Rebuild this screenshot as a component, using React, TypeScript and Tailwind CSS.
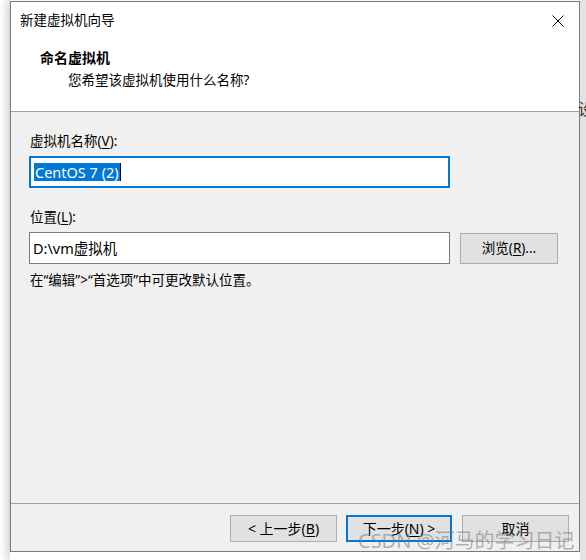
import React from "react";

const font = { fontFamily: '"Noto Sans", "Noto Sans CJK SC", sans-serif' };

function U({ c }: { c: string }) {
  return <span className="underline underline-offset-2">{c}</span>;
}

export default function App() {
  return (
    <div className="relative w-[586px] h-[560px] overflow-hidden bg-white text-[13.5px] text-black" style={font}>
      <div className="flex h-full">
        <div className="w-[10px] shrink-0 bg-gradient-to-r from-white to-[#ececec]" />
        <div className="flex flex-col">
          <div className="h-[1px] bg-white" />
          <div className="w-[570px] h-[551px] border border-[#7a7a7a] flex flex-col bg-[#f0f0f0] shadow-[0_4px_10px_rgba(0,0,0,0.18)]">
            {/* title + header */}
            <div className="bg-white border-b border-[#a0a0a0] flex flex-col">
              <div className="h-[36px] flex items-center justify-between pl-[9px] pr-[15px]">
                <span className="leading-[20px]">新建虚拟机向导</span>
                <svg width="12" height="12" viewBox="0 0 12 12" className="mt-[1px]">
                  <path d="M0.5 0.5 L11.5 11.5 M11.5 0.5 L0.5 11.5" stroke="#000" strokeWidth="1" />
                </svg>
              </div>
              <div className="h-[73px] pt-[10px] pl-[29px] flex flex-col">
                <span className="leading-[20px] font-bold text-[14px]">命名虚拟机</span>
                <span className="leading-[20px] mt-[2px] pl-[28px]">您希望该虚拟机使用什么名称?</span>
              </div>
            </div>
            {/* content */}
            <div className="flex-1 flex flex-col pt-[19px] pl-[18px]">
              <span className="leading-[20px] pl-[1px]">
                虚拟机名称(<U c="V" />):
              </span>
              <div className="mt-[5px] w-[421px] h-[32px] border-2 border-[#0078d7] bg-white flex items-center pl-[3px] text-[14.5px]">
                <span className="bg-[#0078d7] text-white leading-[18px] px-[1px]">CentOS 7 (2)</span>
                <span className="w-[1px] h-[18px] bg-black" />
              </div>
              <span className="leading-[20px] mt-[19px] pl-[1px]">
                位置(<U c="L" />):
              </span>
              <div className="mt-[5px] flex items-center gap-[10px]">
                <div className="w-[421px] h-[32px] border border-[#7a7a7a] bg-white flex items-center pl-[3px] text-[14.5px]">
                  <span className="leading-[18px]">D:\vm虚拟机</span>
                </div>
                <div className="w-[98px] h-[31px] border border-[#adadad] bg-[#e1e1e1] flex items-center justify-center">
                  浏览(<U c="R" />)...
                </div>
              </div>
              <span className="leading-[20px] mt-[6px] pl-[1px]">在“编辑”&gt;“首选项”中可更改默认位置。</span>
            </div>
            {/* footer */}
            <div className="h-[48px] border-t border-[#a0a0a0] flex justify-end items-start pt-[11px] pr-[10px] text-[14px]">
              <div className="w-[107px] h-[27px] border border-[#adadad] bg-[#e1e1e1] flex items-center justify-center">
                &lt; 上一步(<U c="B" />)
              </div>
              <div className="ml-[9px] w-[106px] h-[27px] border-2 border-[#0078d7] bg-[#e1e1e1] flex items-center justify-center">
                下一步(<U c="N" />) &gt;
              </div>
              <div className="ml-[10px] w-[107px] h-[27px] border border-[#adadad] bg-[#e1e1e1] flex items-center justify-center">
                取消
              </div>
            </div>
          </div>
          <div className="flex-1 bg-white" />
        </div>
        <div className="w-[6px] shrink-0 bg-[#e3e3e3] flex flex-col pt-[100px]">
          <span className="text-[16px] leading-[18px] text-[#333] -ml-[2px]">设</span>
        </div>
      </div>
      <span
        className="absolute left-[358px] top-[528px] text-[20px] leading-[26px] text-[rgba(120,120,120,0.55)] whitespace-nowrap"
        style={font}
      >
        CSDN @河马的学习日记
      </span>
    </div>
  );
}
